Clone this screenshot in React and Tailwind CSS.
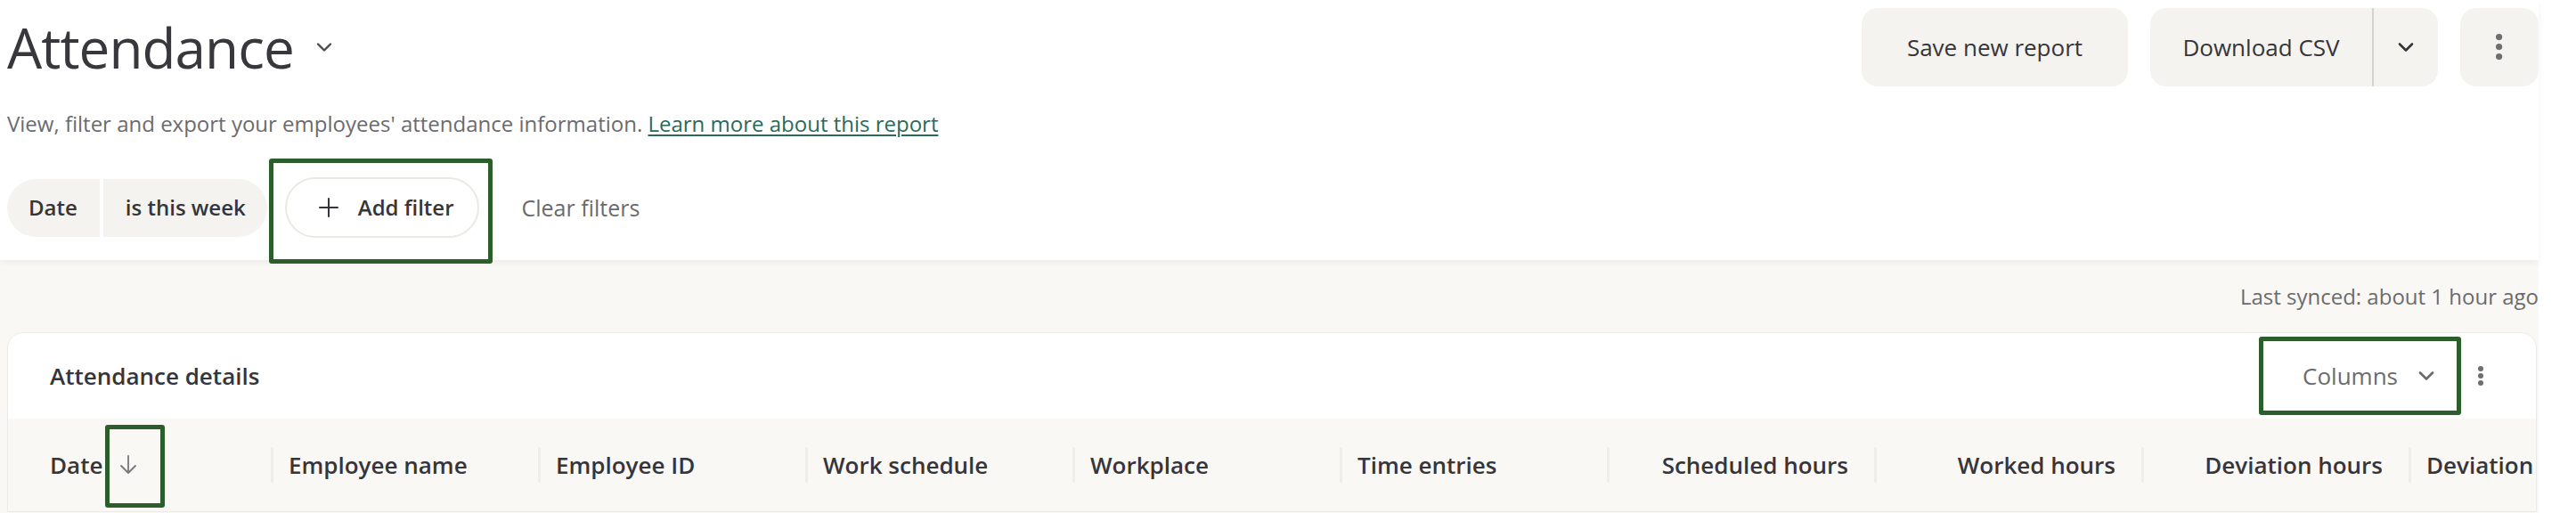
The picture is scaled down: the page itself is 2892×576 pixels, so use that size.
import React from "react";

const Chevron = ({ className = "", w = 20, h = 12, sw = 2.5, color = "#555" }) => (
  <svg width={w} height={h} viewBox="0 0 20 12" className={className} fill="none">
    <path d="M3 2.5 L10 9.5 L17 2.5" stroke={color} strokeWidth={sw} strokeLinecap="round" strokeLinejoin="round" />
  </svg>
);

const Kebab = ({ r = 3.5, gap = 10.5, color = "#6b6b6b" }) => {
  const total = 2 * r + 2 * gap;
  return (
    <svg width={r * 2 + 2} height={total + 2} viewBox={`0 0 ${r * 2 + 2} ${total + 2}`}>
      <circle cx={r + 1} cy={r + 1} r={r} fill={color} />
      <circle cx={r + 1} cy={r + 1 + gap} r={r} fill={color} />
      <circle cx={r + 1} cy={r + 1 + gap * 2} r={r} fill={color} />
    </svg>
  );
};

const Divider = () => <span className="w-[3px] h-[40px] rounded-full bg-[#efede9] shrink-0" />;

const LeftCol = ({ label }) => (
  <div className="w-[300px] shrink-0 flex items-center h-full">
    <Divider />
    <span className="ml-[17px] text-[26px] leading-none font-semibold text-[#35353a] whitespace-nowrap">{label}</span>
  </div>
);

const RightCol = ({ label }) => (
  <div className="w-[300px] shrink-0 flex items-center h-full">
    <Divider />
    <span className="flex-1 text-right pr-[29px] text-[26px] leading-none font-semibold text-[#35353a] whitespace-nowrap">{label}</span>
  </div>
);

export default function App() {
  return (
    <div className="relative w-[2892px] h-[576px] overflow-hidden bg-white font-['Open_Sans','Noto_Sans',sans-serif]">
      <div className="w-[2850px]">
        {/* Header */}
        <header className="relative z-10 h-[292px] bg-white pl-2 shadow-[0_3px_8px_rgba(0,0,0,0.05)]">
          <div className="flex items-start justify-between">
            <div className="flex items-center pt-[22px]">
              <h1 className="text-[62px] leading-none font-normal tracking-[-0.015em] text-[#37373c]">Attendance</h1>
              <Chevron className="ml-[24px]" w={20} h={12} sw={2.4} color="#4a4a4f" />
            </div>
            <div className="flex gap-[25px] pt-[9px]">
              <button className="w-[299px] h-[88px] rounded-[18px] bg-[#f4f3ef] text-[26px] font-medium text-[#35353a]">
                Save new report
              </button>
              <div className="flex h-[88px] rounded-[18px] bg-[#f4f3ef] overflow-hidden">
                <button className="w-[249px] h-full text-[26px] font-medium text-[#35353a]">Download CSV</button>
                <span className="w-[2px] h-full bg-[#d5d3ce]" />
                <button className="w-[72px] h-full flex items-center justify-center">
                  <Chevron w={20} h={12} sw={2.6} color="#35353a" />
                </button>
              </div>
              <button className="w-[88px] h-[88px] rounded-[18px] bg-[#f4f3ef] flex items-center justify-center">
                <Kebab r={3.6} gap={11} color="#6e6e70" />
              </button>
            </div>
          </div>

          <p className="mt-[30px] text-[24px] leading-none text-[#6b6b6e]">
            View, filter and export your employees' attendance information.{" "}
            <a className="text-[#2b6a58] underline underline-offset-[3px] decoration-[1.5px]">Learn more about this report</a>
          </p>

          <div className="mt-[48px] h-[68px] flex items-center">
            <div className="flex gap-[4px]">
              <span className="h-[65px] pl-[24px] pr-[25px] flex items-center rounded-l-full bg-[#f4f3ef] text-[24px] leading-none font-semibold text-[#35353a]">
                Date
              </span>
              <span className="h-[65px] pl-[25px] pr-[24px] flex items-center rounded-r-full bg-[#f4f3ef] text-[24px] leading-none font-semibold text-[#35353a]">
                is this week
              </span>
            </div>
            <button className="ml-[20px] h-[68px] pl-[36px] pr-[26px] flex items-center gap-[22px] rounded-full border-2 border-[#ebe9e3] bg-white text-[24px] leading-none font-semibold text-[#35353a]">
              <svg width="22" height="22" viewBox="0 0 22 22" fill="none">
                <path d="M11 1 V21 M1 11 H21" stroke="#35353a" strokeWidth="2" strokeLinecap="round" />
              </svg>
              Add filter
            </button>
            <button className="ml-[48px] text-[25px] leading-none font-medium text-[#6b6b6e]">Clear filters</button>
          </div>
        </header>

        {/* Grey content area */}
        <div className="h-[284px] bg-[#faf8f5] pl-2">
          <div className="flex justify-end pt-[29px]">
            <span className="text-[24px] leading-none text-[#6b6b6e]">Last synced: about 1 hour ago</span>
          </div>

          <div className="mt-[28px] w-[2840px] rounded-t-[18px] border border-[#ecebe6] bg-white overflow-hidden">
            <div className="h-[96px] flex items-center justify-between pl-[47px] pr-[58px]">
              <h2 className="text-[26px] leading-none font-semibold text-[#35353a]">Attendance details</h2>
              <div className="flex items-center">
                <button className="flex items-center gap-[22px] text-[26px] leading-none font-medium text-[#6b6b6e]">
                  Columns
                  <Chevron w={20} h={12} sw={2.6} color="#6b6b6e" />
                </button>
                <span className="ml-[47px] flex items-center">
                  <Kebab r={3} gap={8} color="#6e6e70" />
                </span>
              </div>
            </div>

            <div className="h-[104px] bg-[#faf8f5] flex items-center">
              <div className="w-[295px] shrink-0 pl-[47px] flex items-center h-full">
                <span className="text-[26px] leading-none font-semibold text-[#35353a]">Date</span>
                <svg className="ml-[18px]" width="22" height="26" viewBox="0 0 22 26" fill="none">
                  <path d="M11 3 V22 M3 14 L11 22 L19 14" stroke="#77777a" strokeWidth="1.8" strokeLinecap="round" strokeLinejoin="round" />
                </svg>
              </div>
              <LeftCol label="Employee name" />
              <LeftCol label="Employee ID" />
              <LeftCol label="Work schedule" />
              <LeftCol label="Workplace" />
              <LeftCol label="Time entries" />
              <RightCol label="Scheduled hours" />
              <RightCol label="Worked hours" />
              <RightCol label="Deviation hours" />
              <LeftCol label="Deviation" />
            </div>
          </div>
        </div>
      </div>

      {/* Annotation highlight boxes */}
      <div className="pointer-events-none absolute z-20 left-[302px] top-[178px] w-[251px] h-[118px] border-[5px] border-[#2c5e2b] rounded-[3px]" />
      <div className="pointer-events-none absolute z-20 left-[118px] top-[477px] w-[67px] h-[93px] border-[5px] border-[#2c5e2b] rounded-[3px]" />
      <div className="pointer-events-none absolute z-20 left-[2536px] top-[378px] w-[227px] h-[88px] border-[5px] border-[#2c5e2b] rounded-[3px]" />
    </div>
  );
}
